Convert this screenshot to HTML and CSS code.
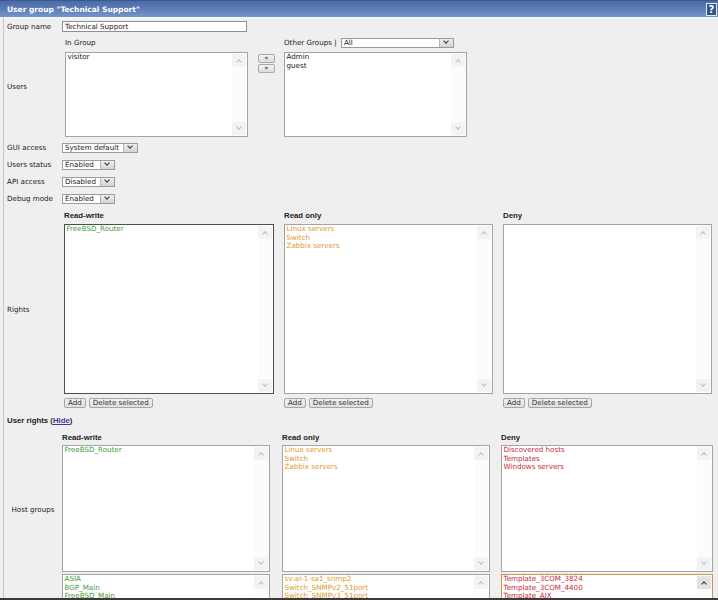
FILE: index.html
```html
<!DOCTYPE html>
<html>
<head>
<meta charset="utf-8">
<title>User group</title>
<link rel="stylesheet" href="styles.css">
</head>
<body>
<div class="frame">
  <div class="header">
    <span class="title">User group "Technical Support"</span>
    <span class="help">?</span>
  </div>
  <div class="form">
    <div class="row row-name">
      <div class="label">Group name</div>
      <div class="field"><div class="input">Technical Support</div></div>
    </div>

    <div class="row row-users">
      <div class="label">Users</div>
      <div class="field users">
        <div class="ucol">
          <div class="uhead">In Group</div>
          <div class="lb lb-users">
            <div class="items"><div>visitor</div></div>
            <div class="sb"><span class="sbtn up"></span><span class="sbtn dn"></span></div>
          </div>
        </div>
        <div class="movers">
          <span class="mbtn">&laquo;</span>
          <span class="mbtn">&raquo;</span>
        </div>
        <div class="ucol">
          <div class="uhead">Other Groups | <span class="sel sel-all"><span class="stext">All</span><span class="sarrow"></span></span></div>
          <div class="lb lb-users">
            <div class="items"><div>Admin</div><div>guest</div></div>
            <div class="sb"><span class="sbtn up"></span><span class="sbtn dn"></span></div>
          </div>
        </div>
      </div>
    </div>

    <div class="row row-opt">
      <div class="label">GUI access</div>
      <div class="field"><span class="sel sel-gui"><span class="stext">System default</span><span class="sarrow"></span></span></div>
    </div>
    <div class="row row-opt">
      <div class="label">Users status</div>
      <div class="field"><span class="sel sel-small"><span class="stext">Enabled</span><span class="sarrow"></span></span></div>
    </div>
    <div class="row row-opt">
      <div class="label">API access</div>
      <div class="field"><span class="sel sel-small"><span class="stext">Disabled</span><span class="sarrow"></span></span></div>
    </div>
    <div class="row row-opt">
      <div class="label">Debug mode</div>
      <div class="field"><span class="sel sel-small"><span class="stext">Enabled</span><span class="sarrow"></span></span></div>
    </div>

    <div class="row row-rights">
      <div class="label">Rights</div>
      <div class="field rights">
        <div class="rcol">
          <div class="rhead">Read-write</div>
          <div class="lb lb-rights focus">
            <div class="items green"><div>FreeBSD_Router</div></div>
            <div class="sb"><span class="sbtn up"></span><span class="sbtn dn"></span></div>
          </div>
          <div class="btns"><span class="btn">Add</span><span class="btn">Delete selected</span></div>
        </div>
        <div class="rcol">
          <div class="rhead">Read only</div>
          <div class="lb lb-rights">
            <div class="items orange"><div>Linux servers</div><div>Switch</div><div>Zabbix servers</div></div>
            <div class="sb"><span class="sbtn up"></span><span class="sbtn dn"></span></div>
          </div>
          <div class="btns"><span class="btn">Add</span><span class="btn">Delete selected</span></div>
        </div>
        <div class="rcol">
          <div class="rhead">Deny</div>
          <div class="lb lb-rights">
            <div class="items red"></div>
            <div class="sb"><span class="sbtn up"></span><span class="sbtn dn"></span></div>
          </div>
          <div class="btns"><span class="btn">Add</span><span class="btn">Delete selected</span></div>
        </div>
      </div>
    </div>

    <div class="row row-ur">
      <div class="urtitle">User rights (<a class="hide" href="#">Hide</a>)</div>
    </div>

    <div class="row row-hhead">
      <div class="label"></div>
      <div class="field hgrid">
        <div class="rhead">Read-write</div>
        <div class="rhead">Read only</div>
        <div class="rhead">Deny</div>
      </div>
    </div>

    <div class="row row-hg">
      <div class="label center">Host groups</div>
      <div class="field hgrid">
        <div class="lb lb-hg">
          <div class="items green"><div>FreeBSD_Router</div></div>
          <div class="sb"><span class="sbtn up"></span><span class="sbtn dn"></span></div>
        </div>
        <div class="lb lb-hg">
          <div class="items orange"><div>Linux servers</div><div>Switch</div><div>Zabbix servers</div></div>
          <div class="sb"><span class="sbtn up"></span><span class="sbtn dn"></span></div>
        </div>
        <div class="lb lb-hg">
          <div class="items red"><div>Discovered hosts</div><div>Templates</div><div>Windows servers</div></div>
          <div class="sb"><span class="sbtn up"></span><span class="sbtn dn"></span></div>
        </div>
      </div>
    </div>

    <div class="row row-tpl">
      <div class="label center"></div>
      <div class="field hgrid">
        <div class="lb lb-tpl">
          <div class="items green"><div>ASIA</div><div>BGP_Main</div><div>FreeBSD_Main</div></div>
          <div class="sb"><span class="sbtn up"></span><span class="sbtn dn"></span></div>
        </div>
        <div class="lb lb-tpl">
          <div class="items orange"><div>sv-al-1-sa1_snmp2</div><div>Switch_SNMPv2_51port</div><div>Switch_SNMPv3_51port</div></div>
          <div class="sb"><span class="sbtn up"></span><span class="sbtn dn"></span></div>
        </div>
        <div class="lb lb-tpl active">
          <div class="items red"><div>Template_3COM_3824</div><div>Template_3COM_4400</div><div>Template_AIX</div></div>
          <div class="sb"><span class="sbtn up"></span><span class="sbtn dn"></span></div>
        </div>
      </div>
    </div>
  </div>
</div>
</body>
</html>
```

FILE: styles.css
```css
html, body {
  margin: 0;
  padding: 0;
}
body {
  width: 718px;
  height: 600px;
  overflow: hidden;
  background: #efefef;
  font-family: "DejaVu Sans", Verdana, sans-serif;
  font-size: 7.15px;
  color: #222;
}
.frame {
  height: 598px;
  overflow: hidden;
  border-bottom: 2px solid #3a3a3a;
}
.header {
  height: 17px;
  box-sizing: border-box;
  border-top: 1px solid #3d5a8e;
  background: linear-gradient(#4b6ba5, #5a7bb6 45%, #7595ca);
  display: flex;
  align-items: center;
  justify-content: space-between;
  padding-left: 7px;
  padding-right: 1px;
}
.title {
  color: #fff;
  font-family: "DejaVu Sans", Verdana, sans-serif;
  font-weight: bold;
  font-size: 7.5px;
}
.help {
  width: 9px;
  height: 11px;
  border: 1px solid #e4ebf6;
  background: #34538c;
  color: #fff;
  font-weight: bold;
  font-size: 10px;
  line-height: 11px;
  text-align: center;
}
.form {
  margin-left: 3px;
  border-left: 1px solid #c6c6c6;
  border-top: 2px solid #f6f6f6;
}
.row {
  display: flex;
}
.label {
  width: 55px;
  flex: none;
  padding-left: 3px;
  display: flex;
  align-items: center;
}
.label.center {
  justify-content: center;
  padding-left: 0;
  width: 58px;
}
.field {
  flex: 1;
  display: flex;
  align-items: center;
}

/* group name */
.row-name {
  height: 15px;
  align-items: center;
}
.input {
  width: 181px;
  height: 9px;
  line-height: 9px;
  border: 1px solid #8f8f8f;
  background: #fff;
  padding-left: 2px;
}

/* users */
.row-users {
  height: 105px;
}
.users {
  align-items: flex-start;
  padding-left: 3px;
  padding-top: 4px;
}
.ucol {
  display: flex;
  flex-direction: column;
}
.uhead {
  height: 10px;
  line-height: 10px;
  margin-bottom: 4px;
  display: flex;
  align-items: center;
  white-space: pre;
}
.movers {
  display: flex;
  flex-direction: column;
  gap: 1px;
  margin-left: 10px;
  margin-right: 9px;
  padding-top: 16px;
}
.mbtn {
  width: 15px;
  height: 7px;
  border: 1px solid #a9a9a9;
  border-radius: 2px;
  background: linear-gradient(#f4f4f4, #dcdcdc);
  font-size: 7px;
  line-height: 7px;
  text-align: center;
  color: #222;
  overflow: hidden;
}

/* list boxes */
.lb {
  display: flex;
  box-sizing: border-box;
  border: 1px solid #a4a4a4;
  background: #fff;
  overflow: hidden;
}
.lb.focus {
  border-color: #4e4e4e;
}
.lb.active {
  border-color: #c69a4e;
}
.items {
  flex: 1;
  padding: 0 1.5px;
  line-height: 8.7px;
  white-space: nowrap;
  overflow: hidden;
}
.green { color: #3f9c3b; }
.orange { color: #de9a2c; }
.red { color: #c52b3a; }
.sb {
  width: 14px;
  flex: none;
  display: flex;
  flex-direction: column;
  justify-content: space-between;
  padding: 1px 1px 1px 0;
  background: #fcfcfc;
}
.sbtn {
  height: 13px;
  background: #f3f3f3;
  position: relative;
}
.sbtn::after {
  content: "";
  position: absolute;
  left: 5px;
  width: 3px;
  height: 3px;
  border-left: 1px solid #bdbdbd;
  border-top: 1px solid #bdbdbd;
}
.sbtn.up::after {
  top: 6px;
  transform: rotate(45deg);
}
.sbtn.dn::after {
  top: 3px;
  transform: rotate(225deg);
}
.lb.active .sbtn.up {
  background: #e2e2e2;
}
.lb.active .sbtn.up::after {
  border-color: #333;
}
.lb-users {
  width: 183px;
  height: 85px;
}

/* selects */
.sel {
  display: inline-flex;
  box-sizing: border-box;
  height: 10px;
  border: 1px solid #9c9c9c;
  background: #fff;
  line-height: 8px;
}
.stext {
  flex: 1;
  padding-left: 2px;
}
.sarrow {
  width: 13px;
  flex: none;
  background: linear-gradient(#f0f0f0, #d3d3d3);
  border-left: 1px solid #b5b5b5;
  position: relative;
}
.sarrow::after {
  content: "";
  position: absolute;
  left: 4px;
  top: 0px;
  width: 3px;
  height: 3px;
  border-right: 1.5px solid #333;
  border-bottom: 1.5px solid #333;
  transform: rotate(45deg);
}
.sel-all {
  width: 113px;
  margin-left: 2px;
}
.sel-gui {
  width: 76px;
}
.sel-small {
  width: 53px;
}
.row-opt {
  height: 17px;
  align-items: center;
}

/* rights */
.row-rights {
  height: 204px;
}
.rights {
  align-items: flex-start;
  padding-left: 2px;
  padding-top: 4px;
  display: grid;
  grid-template-columns: 210px 209px 209px;
  column-gap: 10px;
}
.rcol {
  display: flex;
  flex-direction: column;
}
.rhead {
  height: 10px;
  line-height: 10px;
  font-family: "Liberation Sans", Arial, sans-serif;
  font-weight: bold;
  font-size: 7.8px;
  color: #222;
}
.rcol .rhead {
  margin-bottom: 3px;
}
.lb-rights {
  height: 170px;
}
.btns {
  display: flex;
  gap: 3px;
  margin-top: 4px;
}
.btn {
  height: 8px;
  line-height: 8px;
  padding: 0 3px;
  border: 1px solid #a6a6a6;
  border-radius: 2px;
  background: linear-gradient(#f2f2f2, #dedede);
  color: #333;
}

/* user rights */
.row-ur {
  height: 18px;
  align-items: center;
}
.urtitle {
  padding-left: 3px;
  font-family: "Liberation Sans", Arial, sans-serif;
  font-weight: bold;
  font-size: 7.8px;
}
.hide {
  color: #3a3aa0;
  text-decoration: underline;
}

/* host groups */
.hgrid {
  display: grid;
  grid-template-columns: 208px 208px 211px;
  column-gap: 12px;
  align-items: start;
}
.row-hhead {
  height: 16px;
}
.row-hhead .hgrid {
  align-items: center;
  padding-top: 1px;
}
.row-hhead .hgrid .rhead:nth-child(3) {
  margin-left: -1px;
}
.row-hg {
  height: 129px;
}
.lb-hg {
  height: 127px;
}
.hgrid .lb:nth-child(3) {
  margin-left: -1px;
}
.row-tpl {
  height: 60px;
}
.lb-tpl {
  height: 60px;
}
```
